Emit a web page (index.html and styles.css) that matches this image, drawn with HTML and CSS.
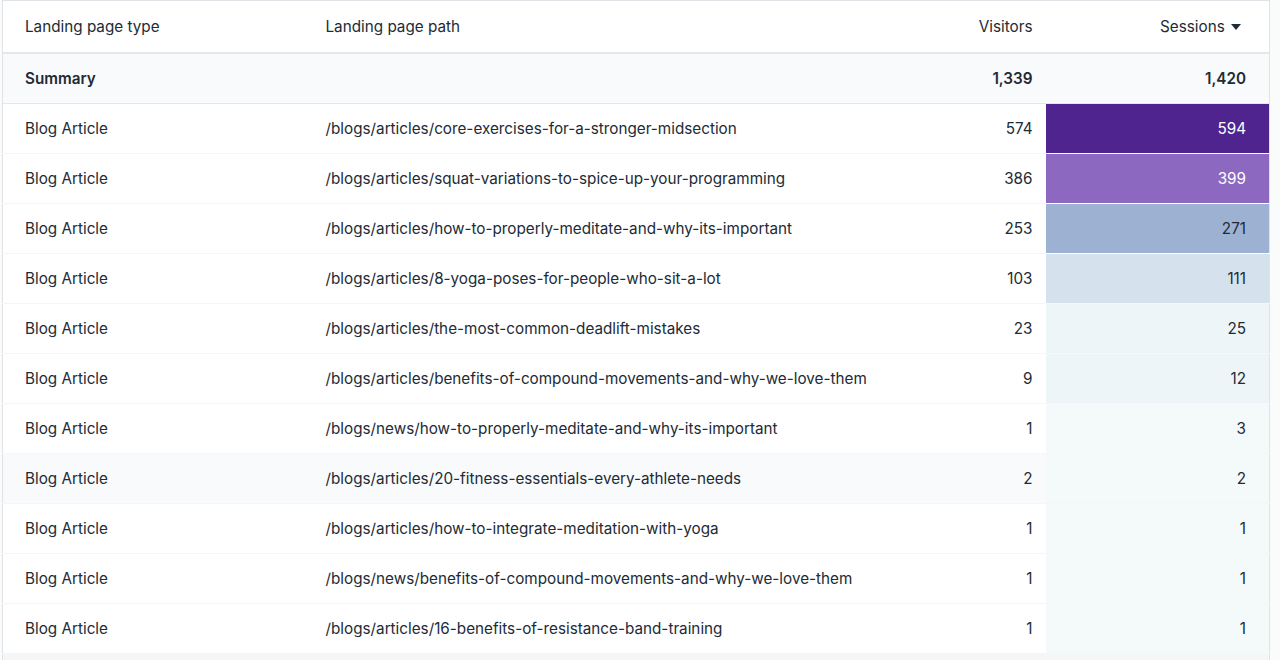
FILE: index.html
```html
<!DOCTYPE html>
<html lang="en">
<head>
<meta charset="utf-8">
<title>Landing pages</title>
<link rel="stylesheet" href="styles.css">
</head>
<body>
<div class="wrap">
<table class="report">
  <colgroup>
    <col class="c-type">
    <col class="c-path">
    <col class="c-vis">
    <col class="c-ses">
  </colgroup>
  <thead>
    <tr class="head">
      <th class="left">Landing page type</th>
      <th class="left">Landing page path</th>
      <th class="num">Visitors</th>
      <th class="num ses-h">Sessions <span class="caret"><svg width="10" height="6" viewBox="0 0 10 6"><path d="M0 0h10L5 6z" fill="#212b36"/></svg></span></th>
    </tr>
  </thead>
  <tbody>
    <tr class="summary">
      <td>Summary</td>
      <td></td>
      <td class="num">1,339</td>
      <td class="num ses">1,420</td>
    </tr>
    <tr><td>Blog Article</td><td>/blogs/articles/core-exercises-for-a-stronger-midsection</td><td class="num">574</td><td class="num ses h1">594</td></tr>
    <tr><td>Blog Article</td><td>/blogs/articles/squat-variations-to-spice-up-your-programming</td><td class="num">386</td><td class="num ses h2">399</td></tr>
    <tr><td>Blog Article</td><td>/blogs/articles/how-to-properly-meditate-and-why-its-important</td><td class="num">253</td><td class="num ses h3">271</td></tr>
    <tr><td>Blog Article</td><td>/blogs/articles/8-yoga-poses-for-people-who-sit-a-lot</td><td class="num">103</td><td class="num ses h4">111</td></tr>
    <tr><td>Blog Article</td><td>/blogs/articles/the-most-common-deadlift-mistakes</td><td class="num">23</td><td class="num ses h5">25</td></tr>
    <tr><td>Blog Article</td><td>/blogs/articles/benefits-of-compound-movements-and-why-we-love-them</td><td class="num">9</td><td class="num ses h5">12</td></tr>
    <tr><td>Blog Article</td><td>/blogs/news/how-to-properly-meditate-and-why-its-important</td><td class="num">1</td><td class="num ses h6">3</td></tr>
    <tr class="hover"><td>Blog Article</td><td>/blogs/articles/20-fitness-essentials-every-athlete-needs</td><td class="num">2</td><td class="num ses h6">2</td></tr>
    <tr><td>Blog Article</td><td>/blogs/articles/how-to-integrate-meditation-with-yoga</td><td class="num">1</td><td class="num ses h6">1</td></tr>
    <tr><td>Blog Article</td><td>/blogs/news/benefits-of-compound-movements-and-why-we-love-them</td><td class="num">1</td><td class="num ses h6">1</td></tr>
    <tr><td>Blog Article</td><td>/blogs/articles/16-benefits-of-resistance-band-training</td><td class="num">1</td><td class="num ses h6">1</td></tr>
    <tr class="next"><td></td><td></td><td></td><td></td></tr>
  </tbody>
</table>
</div>
</body>
</html>
```

FILE: styles.css
```css
html, body {
  margin: 0;
  padding: 0;
  background: #fafbfb;
  height: 660px;
  overflow: hidden;
}
.wrap {
  padding: 0 0 0 2px;
}
.report {
  width: 1268px;
  border-collapse: collapse;
  table-layout: fixed;
  background: #ffffff;
  border: 1px solid #dfe3e8;
  font-family: Inter, "Noto Sans", sans-serif;
  font-size: 15.25px;
  color: #212b36;
}
.c-type { width: 301px; }
.c-path { width: 300px; }
.c-vis { width: auto; }
.c-ses { width: 224px; }
th, td {
  height: 49px;
  padding: 0 0 0 22px;
  text-align: left;
  white-space: nowrap;
  border-bottom: 1px solid #f4f6f8;
  font-weight: 400;
}
th {
  height: 51px;
  border-bottom: 2px solid #e3e6ea;
}
.num {
  text-align: right;
  padding: 0 13px 0 0;
}
.ses {
  padding-right: 23px;
}
.ses-h {
  padding-right: 28px;
}
.caret {
  display: inline-block;
  margin-left: 2px;
  vertical-align: 2px;
}
.caret svg { display: block; }
.summary td {
  background: #f9fafb;
  font-weight: 600;
  height: 49px;
  border-bottom: 1px solid #e3e6ea;
}
.hover td { background: #f9fafb; }
.h1 { background: #50248f !important; color: #ffffff; border-bottom-color: #ffffff; }
.h2 { background: #8c68c0 !important; color: #ffffff; border-bottom-color: #ffffff; }
.h3 { background: #9db2d3 !important; border-bottom-color: #ffffff; }
.h4 { background: #d5e1ec !important; }
.h5 { background: #eef5f8 !important; border-bottom-color: #f4f8fa; }
.h6 { background: #f4f9fa !important; }
.next td { background: #f4f6f8; }
```
